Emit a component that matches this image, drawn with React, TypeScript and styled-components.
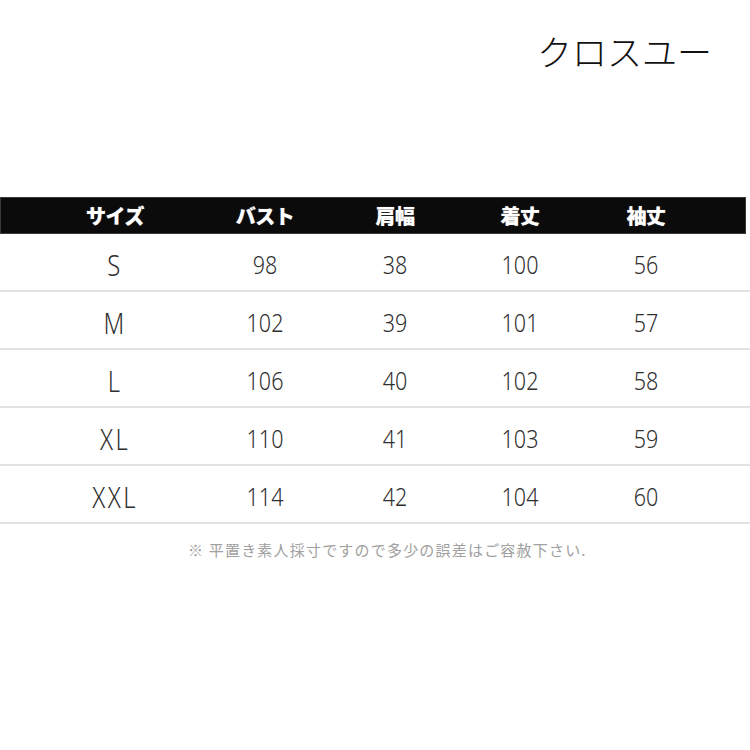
import { createGlobalStyle, styled } from "styled-components";

const GlobalStyle = createGlobalStyle`
  html, body {
    margin: 0;
    padding: 0;
    background: #ffffff;
  }
  body {
    font-family: "Noto Sans CJK JP", "Noto Sans", sans-serif;
  }
`;

const columns = ["サイズ", "バスト", "肩幅", "着丈", "袖丈"];

const rows = [
  ["S", "98", "38", "100", "56"],
  ["M", "102", "39", "101", "57"],
  ["L", "106", "40", "102", "58"],
  ["XL", "110", "41", "103", "59"],
  ["XXL", "114", "42", "104", "60"],
];

const App = () => {
  return (
    <Page>
      <GlobalStyle />
      <Brand>クロスユー</Brand>
      <Table>
        <HeaderRow>
          {columns.map((c) => (
            <HeadCell key={c}>{c}</HeadCell>
          ))}
        </HeaderRow>
        {rows.map((r) => (
          <BodyRow key={r[0]}>
            {r.map((v, i) => (
              <Cell key={i} $first={i === 0}>
                {v}
              </Cell>
            ))}
          </BodyRow>
        ))}
      </Table>
      <Note>※ 平置き素人採寸ですので多少の誤差はご容赦下さい.</Note>
    </Page>
  );
};

export default App;

const Page = styled.main`
  width: 750px;
  height: 750px;
  display: flex;
  flex-direction: column;
  background: #fff;
`;

const Brand = styled.h1`
  margin: 0;
  padding: 33px 38px 0 0;
  height: 197px;
  flex-shrink: 0;
  box-sizing: border-box;
  text-align: right;
  font-family: "Noto Sans CJK JP", sans-serif;
  font-weight: 300;
  font-size: 35px;
  line-height: 35px;
  color: #111;
`;

const Table = styled.div`
  display: flex;
  flex-direction: column;
  width: 750px;
`;

const gridCols = `
  display: grid;
  grid-template-columns: 152px 148px 112px 138px 114px;
  padding-left: 39px;
  align-items: center;
`;

const HeaderRow = styled.div`
  ${gridCols}
  height: 37px;
  margin-right: 4px;
  background: #0b0b0b;
  box-shadow: inset 0 0 0 1px #3a3a3a;
`;

const HeadCell = styled.div`
  text-align: center;
  color: #fff;
  font-family: "Noto Sans CJK JP", sans-serif;
  font-weight: 900;
  font-size: 20px;
  letter-spacing: -0.5px;
  text-shadow: 0 0 1px #888;
`;

const BodyRow = styled.div`
  ${gridCols}
  height: 56px;
  border-bottom: 2px solid #e2e2e2;
`;

const Cell = styled.div<{ $first: boolean }>`
  text-align: center;
  color: #2f2f2f;
  font-family: "Noto Sans", "DejaVu Sans", sans-serif;
  font-weight: 300;
  font-size: ${(p) => (p.$first ? "29px" : "25px")};
  letter-spacing: ${(p) => (p.$first ? "3px" : "0")};
  transform: scaleX(${(p) => (p.$first ? 0.82 : 0.86)});
  padding-top: 4px;
`;

const Note = styled.p`
  margin: 15px 0 0;
  padding-left: 188px;
  font-family: "Noto Sans CJK JP", sans-serif;
  font-size: 15px;
  letter-spacing: 1.2px;
  color: #a0a0a0;
`;
